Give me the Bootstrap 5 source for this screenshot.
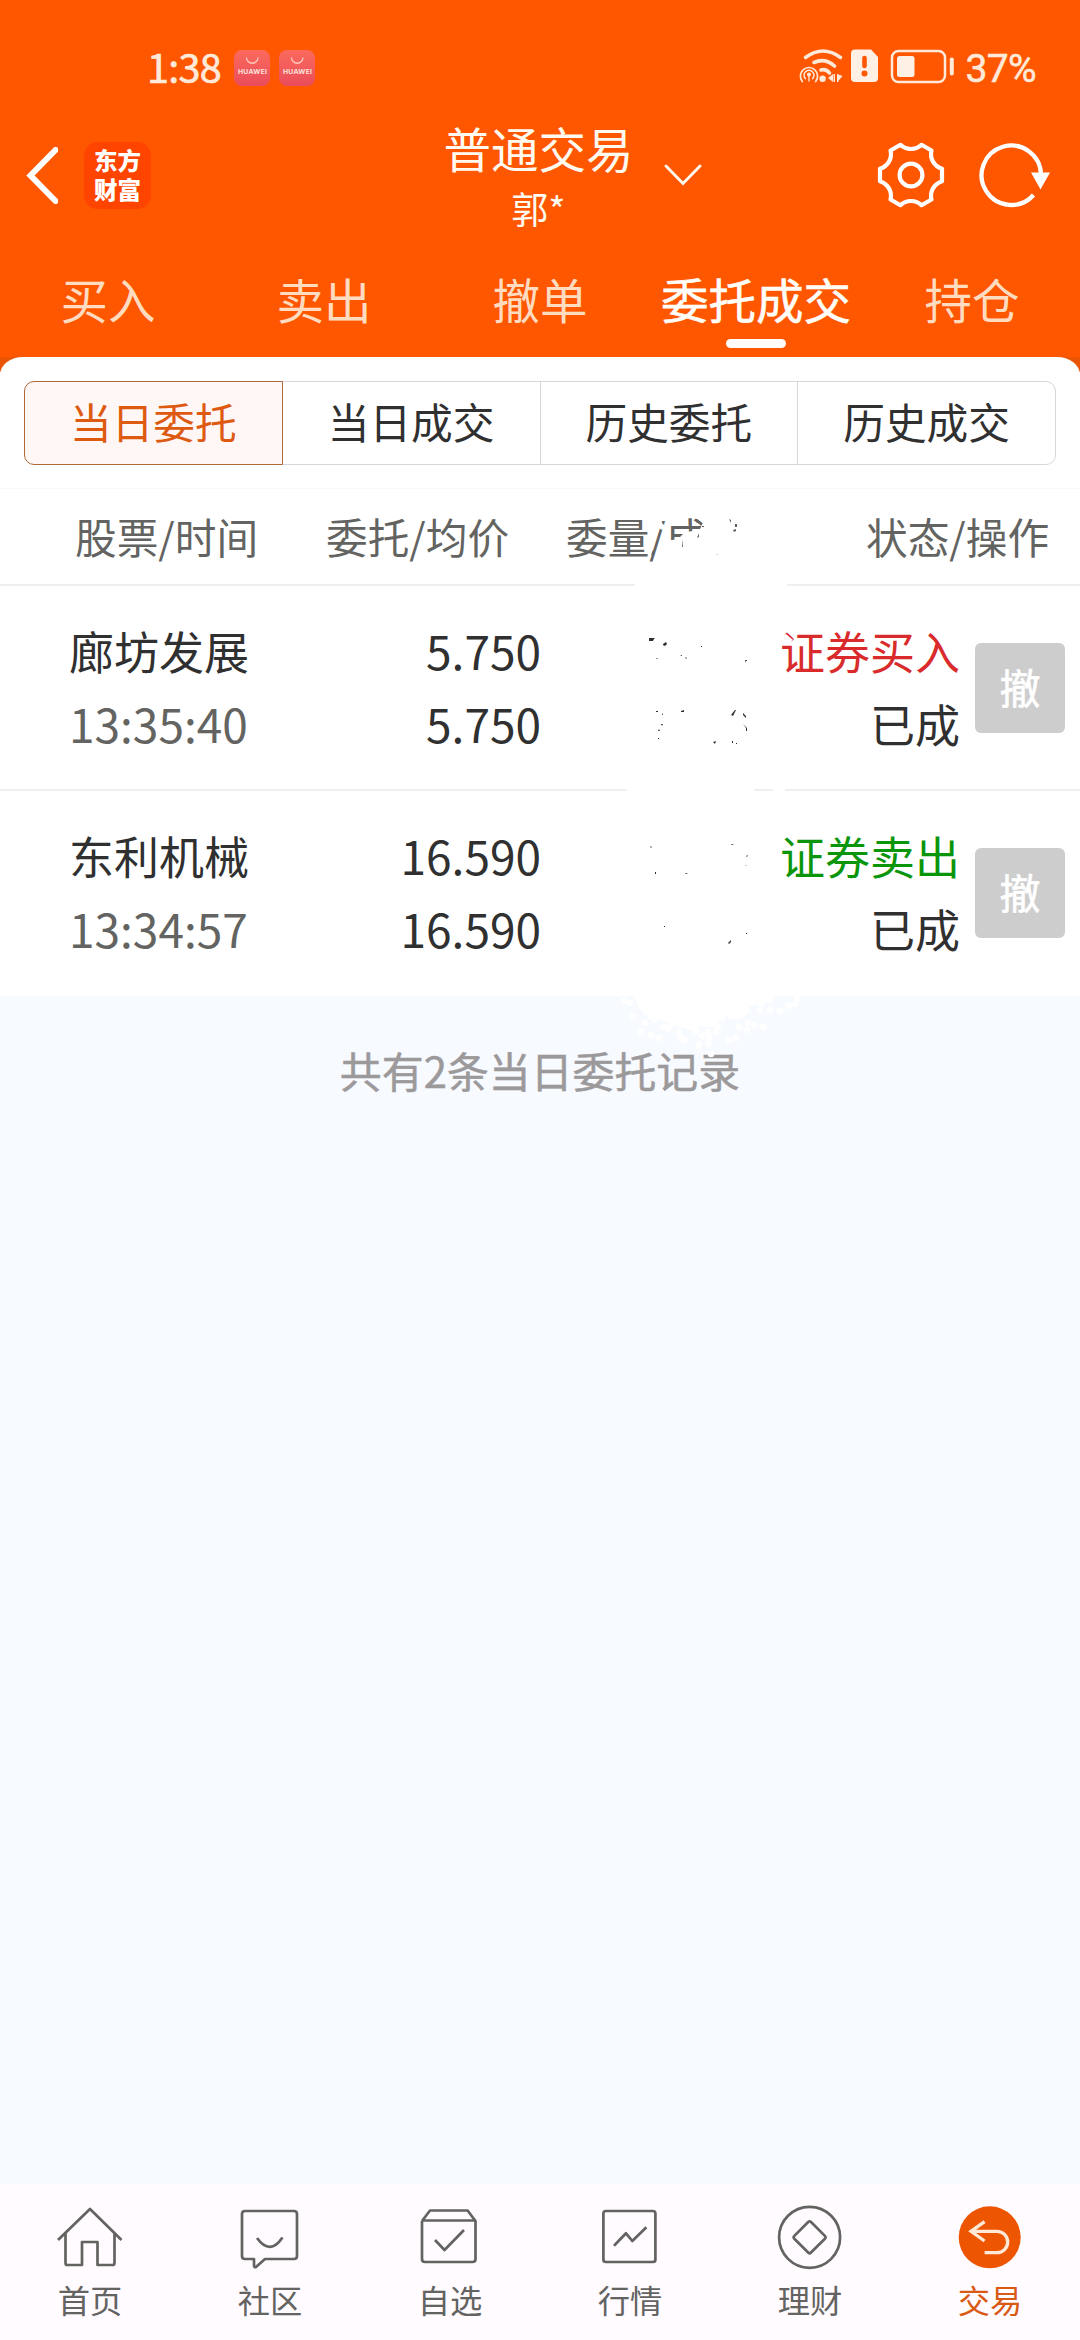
<!DOCTYPE html>
<html lang="zh-CN">
<head>
<meta charset="utf-8">
<meta name="viewport" content="width=device-width, initial-scale=1">
<title>委托成交</title>
<link href="https://cdn.jsdelivr.net/npm/bootstrap@5.3.0/dist/css/bootstrap.min.css" rel="stylesheet">
<style>
body{width:1080px;height:2340px;overflow:hidden;background:#f7faff;font-family:"Noto Sans CJK SC",sans-serif;color:#303030}
svg{display:block;flex:none;fill:none}
.top-area{height:357px;background:#ff5600;color:#fffaf0}
.status-bar{height:117px;padding:19px 30px 0 147px;color:#ffeada}
.clock{font-size:39.5px;-webkit-text-stroke:.7px;letter-spacing:-.7px;line-height:60px;margin-right:9px;margin-top:-5px;width:78px;white-space:nowrap}
.hw{width:36px;height:36px;border-radius:8px;background:linear-gradient(#fb6a5c,#ea4d5c);margin-right:9px}
.pct{font:400 39px/50px Roboto,sans-serif;-webkit-text-stroke:.5px;letter-spacing:-.6px;margin:1px 14px 0 9px}
.title-row{height:120px;padding:0 29px 4px 26px}
.brand{width:67px;height:67px;border-radius:14px;background:#ff4400;font-size:23.5px;font-weight:900;line-height:29px;margin-left:26px}
.account{width:192px}
.account .kind{font-size:47.5px;line-height:60px;white-space:nowrap;margin-top:1px}
.account .who{font-size:37px;line-height:60px}
.trade-tabs{height:120px;padding-top:4px}
.trade-tabs a{width:216px;font-size:47.5px;line-height:60px;color:#ffdcc0;text-decoration:none;position:relative;white-space:nowrap}
.trade-tabs a.active{color:#fffdf8;-webkit-text-stroke:.6px}
.trade-tabs a.active::after{content:"";position:absolute;left:78px;top:70px;width:60px;height:9px;border-radius:5px;background:#fffdfa}
.corner-bg{background:linear-gradient(#ea5504 15px,#fff 15px)}
.sheet{background:#fff;border-radius:23px 23px 0 0/18px 18px 0 0;height:131px;padding:24px 24px 0}
.seg .btn{height:84px;font-size:41.7px;line-height:76px;padding:0 0 4px;border:1.5px solid #d6d6dc;color:#303030;border-radius:10px}
.seg .btn.active{background:#fff6f6;border-color:#b06a3a;color:#dd5a10}
.col-heads{height:98px;border-top:1px solid #f9f9f9;border-bottom:2px solid #efefef;background:#fff;font-size:41.7px;line-height:95px;color:#636461;padding-left:75px;white-space:nowrap}
.h-a{width:251px}.h-b{width:240px}.h-c{width:300px}
.order{height:205px;background:#fff;padding:28px 0 0 69px;line-height:73px;font-size:45px;border-bottom:2px solid #efefef;white-space:nowrap}
.order:last-child{border-bottom:0}
.num{font-size:46px}
.c-a{width:201px}.c-b{width:271px}.c-c{width:419px}
.gray-t{color:#636461}.buy{color:#d92b2b}.sell{color:#0b950b}
.undo{width:90px;height:90px;border-radius:6px;background:#cdcdcd;color:#fff;font-size:41px;-webkit-text-stroke:.6px;line-height:84px;padding:0 0 4px;margin:29px 0 0 15px;border:0}
.eraser{position:absolute;left:600px;top:500px;pointer-events:none}
.total{font-size:41.9px;line-height:60px;padding-top:44px;color:#9c999b;-webkit-text-stroke:.5px}
.tabbar{height:156px;background:#fffbff;color:#636461}
.tabbar a{width:180px;padding-top:20px;color:inherit;text-decoration:none;font-size:32.3px;line-height:46px}
.tabbar svg{width:68px;height:68px;stroke:currentColor;stroke-width:2.7;stroke-linejoin:round;margin-bottom:4px}
.tabbar a.active{color:#d85a14}
</style>
<script src="https://cdn.jsdelivr.net/npm/bootstrap@5.3.0/dist/js/bootstrap.bundle.min.js"></script>
</head>
<body class="d-flex flex-column position-relative">
<header class="top-area flex-shrink-0">
  <div class="status-bar d-flex align-items-center">
    <span class="clock">1:38</span>
    <svg class="hw" viewBox="0 0 36 36"><path d="M12.500 7.500a5.700 5.700 0 0 0 11.500 0" stroke="#ffc9bd" stroke-width="1.300"/><text x="4" y="24" textLength="29" font-family="Inter,sans-serif" font-size="6.800" font-weight="700" fill="#ffe3dc">HUAWEI</text></svg>
    <svg class="hw" viewBox="0 0 36 36"><path d="M12.500 7.500a5.700 5.700 0 0 0 11.500 0" stroke="#ffc9bd" stroke-width="1.300"/><text x="4" y="24" textLength="29" font-family="Inter,sans-serif" font-size="6.800" font-weight="700" fill="#ffe3dc">HUAWEI</text></svg>
    <svg class="ms-auto" width="168" height="56" viewBox="0 0 168 56" stroke="#ffeada" stroke-linecap="round">
      <path d="M17.500 17.500Q35 4.500 52.500 17.500" stroke-width="3.600"/>
      <path d="M26 22.500Q37 17.500 46.500 26" stroke-width="3.600"/>
      <path d="M33 30Q38 28.500 41.500 33" stroke-width="3.600"/>
      <circle cx="34.600" cy="38.700" r="3.200" fill="#ffeada" stroke="none"/>
      <path d="M14.300 41.500a8.600 8.600 0 1 1 13.400 0" stroke-width="1.700"/>
      <path d="M17.300 38.500a4.900 4.900 0 1 1 7.400 0" stroke-width="1.700"/>
      <circle cx="21" cy="34.500" r="2" fill="#ffeada" stroke="none"/><path d="M21 35v6" stroke-width="1.300"/>
      <path d="M40 38l5-4v8zM54.500 36l-5 6v-8zM45.500 34h1.500v8h-1.500zM49 34h1.500v8H49z" fill="#ffeada" stroke="none"/>
      <path d="M67 9.500H83L90 17V38q0 4-4 4H67q-4 0-4-4V13.500q0-4 4-4z" fill="#fff0e6" stroke="none"/>
      <path d="M76.500 18v8" stroke="#ff5600" stroke-width="4.600"/><circle cx="76.500" cy="33.500" r="3" fill="#ff5600" stroke="none"/>
      <rect x="104" y="11" width="53" height="31" rx="6.500" stroke-width="2.500"/>
      <rect x="109" y="16" width="17.500" height="21" rx="2.500" fill="#fff0e6" stroke="none"/>
      <rect x="161.800" y="17.500" width="4" height="18" rx="1.800" fill="#ffeada" stroke="none"/>
    </svg>
    <span class="pct">37%</span>
  </div>
  <div class="title-row d-flex">
    <div class="d-flex align-items-center flex-fill" style="width:0">
      <svg width="32" height="57" viewBox="0 0 32 57"><path d="M29.500 3L4.500 28.500L29.500 54" stroke="#fff" stroke-width="6" stroke-linecap="round"/></svg>
      <div class="brand text-white d-flex flex-column align-items-center justify-content-center"><div>东方</div><div>财富</div></div>
    </div>
    <div class="account text-center"><div class="kind">普通交易</div><div class="who">郭*</div></div>
    <div class="d-flex align-items-center flex-fill" style="width:0">
      <svg width="38" height="24" viewBox="0 0 38 24" style="margin-left:29px"><path d="M2 3L19 20.500L36 3" stroke="#fffaf0" stroke-width="2.900" stroke-linecap="round"/></svg>
      <svg class="ms-auto" width="68" height="68" viewBox="-34 -34 68 68" stroke="#fff" stroke-width="4.200" stroke-linejoin="round"><circle r="11.400"/>
      <path d="M-10.500 -30.200C-5 -24.600 5 -24.600 10.500 -30.200L20.500 -24.500C18.500 -16.500 23 -9 31 -6.200V6.200C23 9 18.500 16.500 20.500 24.500L10.500 30.200C5 24.600 -5 24.600 -10.500 30.200L-20.500 24.500C-18.500 16.500 -23 9 -31 6.200V-6.200C-23 -9 -18.500 -16.500 -20.500 -24.500Z"/></svg>
      <svg width="74" height="68" viewBox="0 0 74 68" style="margin-left:32px"><path d="M64 34A29.700 29.700 0 1 0 56.500 54" stroke="#fff" stroke-width="4.300"/><path d="M54 31.500H73L63.500 48.500z" fill="#fff"/></svg>
    </div>
  </div>
  <nav class="trade-tabs d-flex align-items-center text-center">
    <a href="#">买入</a><a href="#">卖出</a><a href="#">撤单</a><a href="#" class="active">委托成交</a><a href="#">持仓</a>
  </nav>
</header>
<div class="corner-bg flex-shrink-0">
  <div class="sheet">
    <div class="btn-group w-100 seg">
      <button class="btn active w-25">当日委托</button><button class="btn w-25">当日成交</button><button class="btn w-25">历史委托</button><button class="btn w-25">历史成交</button>
    </div>
  </div>
</div>
<div class="col-heads d-flex flex-shrink-0"><div class="h-a">股票/时间</div><div class="h-b">委托/均价</div><div class="h-c">委量/成交</div><div>状态/操作</div></div>
<main class="flex-shrink-0">
  <section class="order d-flex">
    <div class="c-a"><div>廊坊发展</div><div class="num gray-t">13:35:40</div></div>
    <div class="c-b text-end num"><div>5.750</div><div>5.750</div></div>
    <div class="c-c text-end"><div class="buy">证券买入</div><div>已成</div></div>
    <button class="undo">撤</button>
  </section>
  <section class="order d-flex">
    <div class="c-a"><div>东利机械</div><div class="num gray-t">13:34:57</div></div>
    <div class="c-b text-end num"><div>16.590</div><div>16.590</div></div>
    <div class="c-c text-end"><div class="sell">证券卖出</div><div>已成</div></div>
    <button class="undo">撤</button>
  </section>
</main>
<div class="total text-center flex-grow-1">共有2条当日委托记录</div>
<nav class="tabbar d-flex flex-shrink-0 text-center">
  <a href="#" class="d-flex flex-column align-items-center"><svg viewBox="0 0 68 68"><path d="M2 36L34 5L65.500 36M9.500 29V59q0 2 2 2H26V38H41.500V61H56.500q2 0 2-2V29"/></svg>首页</a>
  <a href="#" class="d-flex flex-column align-items-center"><svg viewBox="0 0 68 68"><path d="M29 55H58q3 0 3-3V10q0-3-3-3H9q-3 0-3 3V52q0 3 3 3H18V61q0 3 2 2Z"/><path d="M21 34q13 18 25.500-.5"/></svg>社区</a>
  <a href="#" class="d-flex flex-column align-items-center"><svg viewBox="0 0 68 68"><path d="M6 17L14 6.500H51.600L59.500 17V55q0 3-3 3H9q-3 0-3-3V17M6 16.500H59.500M19 36L28.500 46L48 26"/></svg>自选</a>
  <a href="#" class="d-flex flex-column align-items-center"><svg viewBox="0 0 68 68"><rect x="7.400" y="7" width="52" height="51" rx="2.500"/><path d="M18 41.700L30 29.300L36.300 37L50.400 23.300"/></svg>行情</a>
  <a href="#" class="d-flex flex-column align-items-center"><svg viewBox="0 0 68 68"><circle cx="33.600" cy="33.300" r="30.500"/><rect x="21.800" y="21.500" width="23.600" height="23.600" rx="2" transform="rotate(45 33.600 33.300)"/></svg>理财</a>
  <a href="#" class="d-flex flex-column align-items-center active"><svg viewBox="0 0 68 68"><circle cx="33.700" cy="33.300" r="31" fill="#ee5500" stroke="none"/><path d="M28.600 17.700L15 27.300L28.600 37M15 27.300H41a10.700 10.700 0 0 1 0 21.400H28.600" stroke="#ffe9d6" stroke-width="3.300" stroke-linejoin="miter"/></svg>交易</a>
</nav>
<!-- white eraser strokes hiding the quantity column -->
<svg class="eraser" width="230" height="580" viewBox="600 500 230 580">
  <g fill="#fff">
    <path d="M678 539L684 533L700 529L709 510H755V575H652L654 558L664 540H672ZM666 527L662 530L657 527L661 522Z"/>
    <path d="M635 583H787V588H635ZM627 788H754V793H627ZM773 788H785V793H773Z"/>
    <path d="M780 636L786 634L793 640L788 643L780 642Z"/>
    <path d="M632 994H780L768 1002L750 1006L738 1020L722 1014L716 1028L700 1026L690 1030L672 1024L656 1018L640 1010Z"/>
  </g>
  <path fill="none" stroke="#fff" stroke-width="6.500" stroke-linecap="round" d="M624 1001h0M630 1003h0M633 1016h0M646 1012h0M651 1017h0M641 1032h0M645 1023h0M655 1020h0M651 1035h0M659 1038h0M664 1027h0M672 1024h0M679 1032h0M681 1038h0M685 1040h0M691 1027h0M699 1045h0M708 1032h0M709 1038h0M709 1044h0M711 1054h0M708 1043h0M716 1032h0M718 1027h0M729 1040h0M736 1038h0M739 1027h0M747 1030h0M748 1023h0M754 1025h0M763 1027h0M722 1018h0M731 1016h0M742 1015h0M746 1011h0M761 1003h0M760 1010h0M770 1010h0M780 1011h0M789 1006h0M795 1004h0M797 999h0M770 1000h0M668 1028h0M696 1031h0M702 1036h0M684 1025h0M742 1006h0"/>
  <g fill="#303030">
    <path d="M649 638h6l-1 1-1 2h-4zM663 644l3-2 1 2-2 2-2-1zM685 657l2 1-1 1zM680 656l2-1v1zM656 658l2 0-1 1zM701 646h1v1h-1zM745 660h2v1h-1v2zM681 711l3-1v2h-3zM656 711h2v1h-2zM662 713l1 2h-1zM661 724h2l-1 2zM658 731l1-2 1 2h-2zM658 738h1v1h-1zM731 715l4-5 1 0-3 6zM743 713l3 3v2l-3-3zM743 724l4 4v3h-1v-3zM713 742l3-1-1 3zM732 741h1v2h-1zM736 743h1v1h-1z"/>
    <path d="M650 846l2 1-1 1zM731 844h3l-2 1zM655 872h1v2h-1zM685 873h3l-2 1zM746 856l2-1-1 2zM745 866l2-1-1 1zM728 943l3-3v2l-2 2zM664 926h1v1h-1zM746 933h1v1h-1z"/>
  </g>
  <g fill="#62635f"><path d="M695 520l3-1-1 4zM702 526h2v1h-2zM729 519l2 1v3zM735 524h2v3h-2zM733 530l3-1v2l-2 1zM682 539l1 8h-1v-5zM716 555l3-1-2 1zM697 538l2-5v4zM651 555l2-5 1 4z"/></g>
</svg>
</body>
</html>
